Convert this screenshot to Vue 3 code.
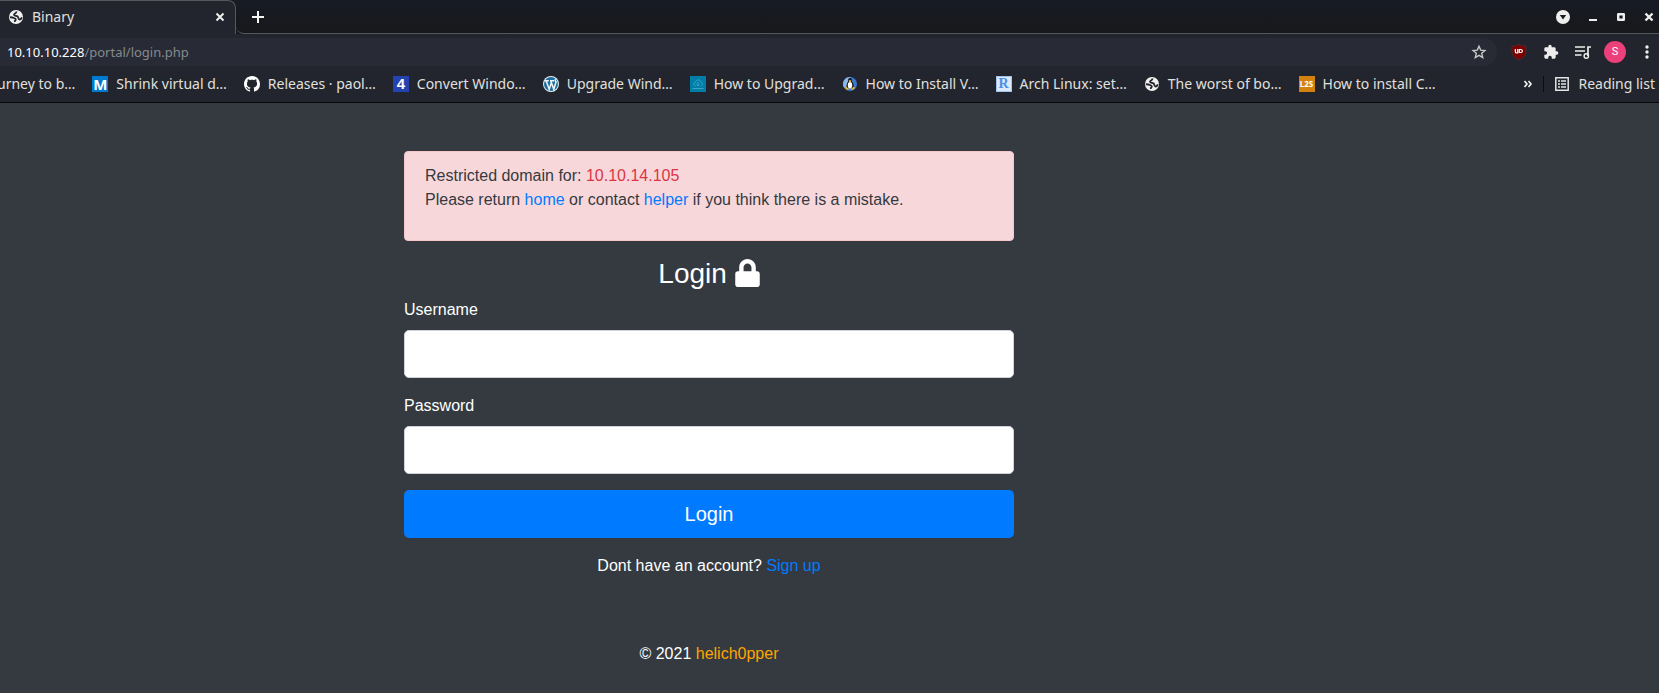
<script setup>
import { ref } from 'vue'

const username = ref('')
const password = ref('')
const address = ref('10.10.10.228/portal/login.php')

const bookmarks = [
  { icon: 'mail', label: 'Shrink virtual d…' },
  { icon: 'github', label: 'Releases · paol…' },
  { icon: 'four', label: 'Convert Windo…' },
  { icon: 'wordpress', label: 'Upgrade Wind…' },
  { icon: 'cloud', label: 'How to Upgrad…' },
  { icon: 'tux', label: 'How to Install V…' },
  { icon: 'serif', label: 'Arch Linux: set…' },
  { icon: 'globe', label: 'The worst of bo…' },
  { icon: 'l2s', label: 'How to install C…' },
]
</script>

<template>
  <div class="window">
    <header class="browser">
      <div class="tabstrip">
        <div class="tab">
          <svg class="ico" viewBox="0 0 16 16" aria-hidden="true">
            <circle cx="8" cy="8" r="7" fill="#f1f1ef" />
            <path d="M2 8.300C4.500 8 5.500 9 7 9.500c1.500.6.500 2.500-1 3M8.500 2.500C8.500 4.500 6 4.500 6 5.800c0 1.400 2.600.6 3.600 1.600 1.200 1.300.4 3.100 2 3.100 1 0 1.900-1.200 2.200-2.300" fill="none" stroke="#22242e" stroke-width="1.800" />
          </svg>
          <span class="tab-title">Binary</span>
          <button class="plain" aria-label="Close tab">
            <svg class="ico" viewBox="0 0 16 16"><path d="M4.500 4.500l7 7M11.500 4.500l-7 7" stroke="#eee" stroke-width="2" /></svg>
          </button>
        </div>
        <div class="strip-rest">
          <button class="plain" aria-label="New tab">
            <svg class="ico" viewBox="0 0 16 16"><path d="M8 2v12M2 8h12" stroke="#f4f4f2" stroke-width="2" /></svg>
          </button>
          <div class="win-buttons">
            <button class="plain" aria-label="Search tabs">
              <svg class="ico" viewBox="0 0 16 16"><circle cx="8" cy="8" r="7" fill="#eeeeec" /><path d="M4.800 6h6.400L8 10.500z" fill="#1a1c22" /></svg>
            </button>
            <button class="plain" aria-label="Minimize">
              <svg class="ico" viewBox="0 0 16 16"><path d="M4 11h8" stroke="#eeeeec" stroke-width="2" /></svg>
            </button>
            <button class="plain" aria-label="Maximize">
              <svg class="ico" viewBox="0 0 16 16"><path d="M5.200 5.200h5.600v5.600H5.200z" fill="none" stroke="#eeeeec" stroke-width="2.400" stroke-linejoin="round" /></svg>
            </button>
            <button class="plain" aria-label="Close window">
              <svg class="ico" viewBox="0 0 16 16"><path d="M4.500 4.500l7 7M11.500 4.500l-7 7" stroke="#eeeeec" stroke-width="2.400" /></svg>
            </button>
          </div>
        </div>
      </div>

      <div class="toolbar">
        <div class="omnibox">
          <div class="address">
            <input v-model="address" class="address-input" type="text" aria-label="Address" />
            <span class="address-text" aria-hidden="true">10.10.10.228<span class="path">/portal/login.php</span></span>
          </div>
          <button class="plain" aria-label="Bookmark this page">
            <svg class="ico" viewBox="0 0 16 16"><path d="M8 2.200l1.700 3.900 4.200.4-3.200 2.800 1 4.200L8 11.300l-3.700 2.200 1-4.200-3.200-2.800 4.200-.4z" fill="none" stroke="#c9c9c7" stroke-width="1.400" /></svg>
          </button>
        </div>
        <div class="extensions">
          <button class="plain" aria-label="uBlock">
            <svg class="ico" viewBox="0 0 16 16">
              <path d="M8 .2c2 1.500 4.500 1.900 7 1.900v5.400c0 4-3 6.500-7 8.300-4-1.800-7-4.300-7-8.300V2.100C3.500 2.100 6 1.700 8 .2z" fill="#7d0000" stroke="#54353a" stroke-width=".6" />
              <path d="M4.300 5v2.700q0 1.300 1.600 1.300h.8V5M8.300 5.500v3h1.400q1.700 0 1.700-1.500t-1.700-1.500z" fill="none" stroke="#fff" stroke-width="1.200" />
            </svg>
          </button>
          <button class="plain" aria-label="Extensions">
            <svg class="ico" viewBox="0 0 24 24"><path fill="#eeeeec" d="M20.500 11H19V7c0-1.100-.9-2-2-2h-4V3.500a2.500 2.500 0 0 0-5 0V5H4c-1.100 0-2 .9-2 2v3.800h1.500a2.700 2.700 0 0 1 0 5.400H2V20c0 1.100.9 2 2 2h3.800v-1.500a2.700 2.700 0 0 1 5.400 0V22H17c1.100 0 2-.9 2-2v-4h1.500a2.500 2.500 0 0 0 0-5z" /></svg>
          </button>
          <button class="plain" aria-label="Media controls">
            <svg class="ico" viewBox="0 0 16 16"><path d="M0 3h10M0 7h10M0 11h6.500" stroke="#eeeeec" stroke-width="1.600" /><path d="M16 3h-3v9" fill="none" stroke="#eeeeec" stroke-width="1.700" /><circle cx="11.300" cy="12" r="2.200" fill="none" stroke="#eeeeec" stroke-width="1.400" /></svg>
          </button>
          <button class="plain avatar" aria-label="Profile">S</button>
          <button class="plain" aria-label="Menu">
            <svg class="ico" viewBox="0 0 16 16" fill="#f1f1ef"><circle cx="8" cy="3" r="1.700" /><circle cx="8" cy="8" r="1.700" /><circle cx="8" cy="13" r="1.700" /></svg>
          </button>
        </div>
      </div>

      <nav class="bookmarks" aria-label="Bookmarks">
        <a class="bookmark first" href="#">urney to b…</a>
        <a v-for="b in bookmarks" :key="b.label" class="bookmark" href="#">
          <span v-if="b.icon === 'mail'" class="tile tile-m">M</span>
          <span v-else-if="b.icon === 'four'" class="tile tile-4">4</span>
          <span v-else-if="b.icon === 'serif'" class="tile tile-r">R</span>
          <span v-else-if="b.icon === 'l2s'" class="tile tile-l">L2S</span>
          <svg v-else-if="b.icon === 'github'" class="ico" viewBox="0 0 16 16" aria-hidden="true"><path fill="#fff" d="M8 0C3.580 0 0 3.580 0 8c0 3.540 2.290 6.530 5.470 7.590.4.070.55-.17.55-.38 0-.19-.01-.82-.01-1.490-2.010.37-2.530-.49-2.690-.94-.09-.23-.48-.94-.82-1.130-.28-.15-.68-.52-.01-.53.63-.01 1.080.58 1.230.82.72 1.210 1.870.87 2.330.66.07-.52.28-.87.51-1.070-1.780-.2-3.640-.89-3.640-3.950 0-.87.31-1.590.82-2.150-.08-.2-.36-1.020.08-2.120 0 0 .67-.21 2.200.82.64-.18 1.320-.27 2-.27s1.360.09 2 .27c1.530-1.040 2.200-.82 2.200-.82.44 1.100.16 1.920.08 2.120.51.56.82 1.270.82 2.150 0 3.070-1.870 3.750-3.650 3.950.29.25.54.73.54 1.480 0 1.070-.01 1.930-.01 2.200 0 .21.15.46.55.38A8.010 8.010 0 0 0 16 8c0-4.420-3.580-8-8-8z" /></svg>
          <svg v-else-if="b.icon === 'wordpress'" class="ico" viewBox="0 0 16 16" aria-hidden="true">
            <circle cx="8" cy="8" r="8" fill="#e8f1f5" /><circle cx="8" cy="8" r="7" fill="#1c6f9c" />
            <path d="M1.800 4.800h4M7 4.800h4M3.200 5l3 8.300L8.300 7M7.800 5l3 8.300 2.300-7.500q-1.700-1.500-.4-2.700" fill="none" stroke="#eef5f8" stroke-width="1.500" />
          </svg>
          <svg v-else-if="b.icon === 'cloud'" class="ico" viewBox="0 0 16 16" aria-hidden="true">
            <path d="M0 0h16v16H0z" fill="#007ea8" /><path d="M5.500 9.500c-2.500 0-2-3 0-3 .5-3.500 5-3.500 5.500 0 2 0 2 3 0 3M8 6v4M6.500 8.500L8 10l1.500-1.500M2.500 12.500h11" fill="none" stroke="#3aa6c6" />
          </svg>
          <svg v-else-if="b.icon === 'tux'" class="ico" viewBox="0 0 16 16" aria-hidden="true">
            <circle cx="8" cy="8" r="7" fill="#3d77cf" /><path d="M2 11.500A7 7 0 0 1 8.500 1L5 12z" fill="#8db6ea" />
            <path d="M8 2c2 0 2 2 2 3.500 1.500 2 2 4 1.500 6.500h-7C4.200 9.500 4.700 7.500 6 5.500 6 4 6 2 8 2z" fill="#15171c" />
            <ellipse cx="8" cy="9.200" rx="2.200" ry="3.200" fill="#fff" /><path d="M7 4.800h2L8 6.200zM4 11l2.500 2H4zM12 11l-2.500 2H12z" fill="#f2b51d" stroke="#f2b51d" />
          </svg>
          <svg v-else class="ico" viewBox="0 0 16 16" aria-hidden="true">
            <circle cx="8" cy="8" r="7" fill="#f1f1ef" />
            <path d="M2 8.300C4.500 8 5.500 9 7 9.500c1.500.6.500 2.500-1 3M8.500 2.500C8.500 4.500 6 4.500 6 5.800c0 1.400 2.600.6 3.600 1.600 1.200 1.300.4 3.100 2 3.100 1 0 1.900-1.200 2.200-2.300" fill="none" stroke="#22242e" stroke-width="1.800" />
          </svg>
          <span>{{ b.label }}</span>
        </a>
        <div class="bookmark-end">
          <button class="plain" aria-label="More bookmarks">
            <svg class="ico" viewBox="0 0 16 16"><path d="M4.500 5L7 8l-2.500 3M8.500 5L11 8l-2.500 3" fill="none" stroke="#eeeeec" stroke-width="1.700" /></svg>
          </button>
          <span class="divider"></span>
          <button class="plain reading">
            <svg class="ico" viewBox="0 0 16 16" aria-hidden="true"><path d="M1.800 1.800h12.400v12.400H1.800z" fill="none" stroke="#e4e4e2" stroke-width="1.500" /><path d="M4 5h2M4 8h2M4 11h2M7 5h5M7 8h5M7 11h5" stroke="#e4e4e2" stroke-width="1.500" /></svg>
            <span>Reading list</span>
          </button>
        </div>
      </nav>
    </header>

    <main class="page">
      <div class="column">
        <div class="alert" role="alert">
          <p>Restricted domain for: <span class="danger">10.10.14.105</span><br />Please return <a href="#">home</a> or contact <a href="#">helper</a> if you think there is a mistake.</p>
        </div>
        <form @submit.prevent>
          <h1>
            Login
            <svg class="lock" viewBox="0 0 448 512" aria-hidden="true"><path fill="#fff" d="M400 224h-24v-72C376 68.200 307.800 0 224 0S72 68.200 72 152v72H48c-26.500 0-48 21.500-48 48v192c0 26.500 21.500 48 48 48h352c26.500 0 48-21.500 48-48V272c0-26.500-21.500-48-48-48zm-104 0H152v-72c0-39.700 32.300-72 72-72s72 32.300 72 72v72z" /></svg>
          </h1>
          <div class="field">
            <label for="username">Username</label>
            <input id="username" v-model="username" type="text" />
          </div>
          <div class="field">
            <label for="password">Password</label>
            <input id="password" v-model="password" type="password" />
          </div>
          <button class="submit" type="submit">Login</button>
          <p class="signup">Dont have an account? <a href="#">Sign up</a></p>
        </form>
        <footer>© 2021 <a class="author" href="#">helich0pper</a></footer>
      </div>
    </main>
  </div>
</template>

<style>
body {
  margin: 0;
  background: #343a40;
}
</style>

<style scoped>
* {
  box-sizing: border-box;
}
.window {
  display: flex;
  flex-direction: column;
  min-height: 100vh;
}
.browser {
  overflow: hidden;
  border-bottom: 1px solid #07080a;
  background: #22242e;
  color: #e0e0de;
  font: 14px/20px "Noto Sans", sans-serif;
  white-space: nowrap;
}
.plain {
  display: flex;
  align-items: center;
  justify-content: center;
  padding: 0;
  border: 0;
  background: none;
  color: inherit;
  font: inherit;
}
.ico {
  display: block;
  flex: none;
  width: 16px;
  height: 16px;
}
.tabstrip {
  display: flex;
  height: 34px;
  background: #181a21;
}
.tab {
  display: flex;
  align-items: center;
  gap: 8px;
  width: 236px;
  padding: 0 7px 1px 8px;
  border-top: 1px solid #55575c;
  border-right: 1px solid #55575c;
  border-radius: 0 8px 0 0;
  background: #22242e;
}
.tab-title {
  flex: 1;
}
.strip-rest {
  display: flex;
  flex: 1;
  align-items: center;
  justify-content: space-between;
  padding: 0 2px 0 14px;
  border-bottom: 1px solid #55575c;
  border-radius: 0 0 0 8px;
  background: linear-gradient(#171b24, #17181b);
}
.win-buttons {
  display: flex;
  gap: 12px;
}
.win-buttons .plain:first-child {
  margin-right: 2px;
}
.toolbar {
  display: flex;
  align-items: center;
  padding: 4px 4px 4px 0;
}
.omnibox {
  display: flex;
  flex: 1;
  align-items: center;
  height: 28px;
  padding: 0 10px 0 7px;
  border-radius: 0 14px 14px 0;
  background: #282a36;
}
.address {
  display: grid;
  flex: 1;
  font-size: 13px;
}
.address > * {
  grid-area: 1 / 1;
}
.address-input {
  padding: 0;
  border: 0;
  outline: 0;
  background: none;
  color: transparent;
  font: inherit;
}
.address-text {
  color: #fff;
  pointer-events: none;
}
.path {
  color: #858a8d;
}
.extensions {
  display: flex;
  align-items: center;
  gap: 16px;
  margin-left: 14px;
}
.avatar {
  width: 22px;
  height: 22px;
  margin: 0 -3px;
  border-radius: 50%;
  background: #ec407a;
  color: #fff;
  font: 11px/22px Roboto, sans-serif;
}
.bookmarks {
  display: flex;
  align-items: center;
  gap: 17px;
  height: 32px;
  padding-bottom: 4px;
}
.bookmark {
  display: flex;
  align-items: center;
  gap: 8px;
  color: inherit;
  text-decoration: none;
}
.first {
  margin-left: -3px;
}
.tile {
  width: 16px;
  height: 16px;
  text-align: center;
}
.tile-m {
  background: #0079d0;
  color: #fff;
  font: bold 15px/16px "Noto Sans", sans-serif;
}
.tile-4 {
  background: #2442b0;
  color: #fff;
  font: bold 15px/16px "Liberation Sans", sans-serif;
}
.tile-r {
  border: 1px solid #9fc2ee;
  background: #dce9fa;
  color: #4b8fe6;
  font: bold 14px/14px "Liberation Serif", serif;
}
.tile-l {
  background: #d3820f;
  color: #fff;
  font: bold 8px/16px "Noto Sans", sans-serif;
}
.bookmark-end {
  display: flex;
  align-items: center;
  gap: 7px;
  margin-left: auto;
  padding-right: 4px;
}
.divider {
  width: 1px;
  height: 16px;
  background: #0b0c0f;
}
.reading {
  gap: 8px;
  padding-left: 3px;
}
.page {
  display: grid;
  flex: 1;
  grid-template-columns: 404fr 610fr 645fr;
  background: #343a40;
  color: #fff;
  font: 16px/24px "Liberation Sans", Arial, sans-serif;
}
.column {
  grid-column: 2;
  min-width: 0;
  padding: 48px 0 24px;
}
.page a {
  color: #007bff;
  text-decoration: none;
}
.alert {
  margin-bottom: 16px;
  padding: 12px 20px 28px;
  border: 1px solid #f5c6cb;
  border-radius: 4px;
  background: #f8d7da;
  color: #343a40;
}
.alert p {
  margin: 0;
}
.danger {
  color: #dc3545;
}
h1 {
  margin: 0 0 7px;
  font-size: 28px;
  font-weight: 400;
  line-height: 34px;
  text-align: center;
}
.lock {
  display: inline-block;
  width: 25px;
  height: 28px;
  vertical-align: -4px;
}
.field {
  display: flex;
  flex-direction: column;
  gap: 8px;
  margin-bottom: 16px;
}
.field input {
  width: 100%;
  height: 48px;
  padding: 8px 16px;
  border: 1px solid #ced4da;
  border-radius: 5px;
  background: #fff;
  font: inherit;
}
.submit {
  display: block;
  width: 100%;
  height: 48px;
  border: 0;
  border-radius: 5px;
  background: #007bff;
  color: #fff;
  font: 20px/30px "Liberation Sans", Arial, sans-serif;
}
.signup {
  margin: 16px 0 64px;
  text-align: center;
}
footer {
  text-align: center;
}
.page .author {
  color: #ffa500;
}
</style>
